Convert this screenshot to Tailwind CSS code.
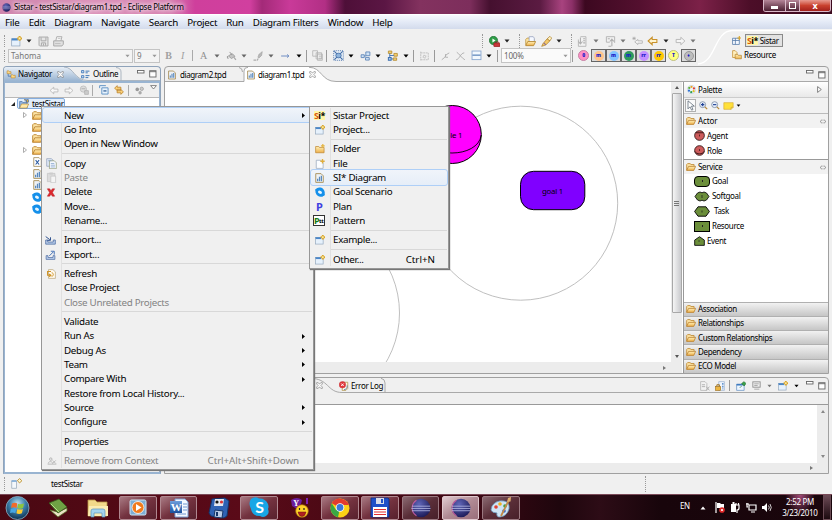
<!DOCTYPE html>
<html lang="en">
<head>
<meta charset="utf-8">
<title>Sistar - testSistar/diagram1.tpd - Eclipse Platform</title>
<script src="https://cdn.jsdelivr.net/npm/@tailwindcss/browser@4"></script>
</head>
<body class="w-[832px] h-[520px] overflow-hidden bg-[#f0f0f0] font-['Noto_Sans',sans-serif] text-[8px] leading-none tracking-[-0.340px] text-black">
<svg class="absolute h-0 w-0">
  <defs>
    <linearGradient id="gFold" x1="0" y1="0" x2="0" y2="1"><stop offset="0" stop-color="#fff0b8"/><stop offset="1" stop-color="#eeb04a"/></linearGradient>
    <linearGradient id="gBlue" x1="0" y1="0" x2="0" y2="1"><stop offset="0" stop-color="#6f9fdc"/><stop offset="1" stop-color="#1a4f9c"/></linearGradient>
    <radialGradient id="gEcl" cx=".4" cy=".3" r=".8"><stop offset="0" stop-color="#6066b8"/><stop offset="1" stop-color="#15134f"/></radialGradient>
    <radialGradient id="gOrb" cx=".5" cy=".3" r=".7"><stop offset="0" stop-color="#b9dcec"/><stop offset=".5" stop-color="#3b7ea8"/><stop offset="1" stop-color="#0d3150"/></radialGradient>
  </defs>
  <symbol id="caret" viewBox="0 0 6 4"><path d="M0.5 0.5h5L3 3.5z" fill="currentColor"/></symbol>
  <symbol id="new" viewBox="0 0 16 16"><rect x="1" y="4" width="12" height="10.5" fill="#e6f1fc" stroke="#8aa0b8"/><rect x="1" y="3.5" width="9" height="3" fill="#4a86c8"/><path d="M12.5 0v7M9 3.5h7" stroke="#d9a62c" stroke-width="3"/><path d="M12.500 2v3M11 3.500h3" stroke="#fff3b0" stroke-width="1.400"/></symbol>
  <symbol id="save" viewBox="0 0 16 16"><path d="M1.500 1.500h13v13h-12l-1-1z" fill="#e6e6e6" stroke="#a8a8a8" stroke-width="1.400"/><path d="M4.500 2v5h7V2M5 14v-4h6v4M8 11v3" fill="none" stroke="#a8a8a8" stroke-width="1.400"/></symbol>
  <symbol id="print" viewBox="0 0 16 16"><path d="M4 7l1.500-6H13l-1.500 6" fill="#f6f6f6" stroke="#a8a8a8" stroke-width="1.300"/><path d="M1 7h14v5l-2 2.500H1z" fill="#e0e0e0" stroke="#a8a8a8" stroke-width="1.400"/><path d="M3 11h8M7 3.500h4" stroke="#b0b0b0"/></symbol>
  <symbol id="run" viewBox="0 0 16 16"><circle cx="6.500" cy="6.500" r="6" fill="#2f9e48" stroke="#1d6e30"/><path d="M5 3.500v6l4.500-3z" fill="#fff"/><rect x="7" y="10" width="9" height="5.500" rx="1" fill="#c8373a" stroke="#8b2023"/><path d="M9.500 10V8.500h4V10" fill="none" stroke="#8b2023"/></symbol>
  <symbol id="open" viewBox="0 0 16 16"><path d="M1 13V5l2-2h4l1 1.500h5V8" fill="#fbe3a0" stroke="#b78a35"/><path d="M6 8V1h6l1.500 2v5" fill="#f5f8ff" stroke="#8a97b8"/><path d="M1 14l3-6h11.500l-3 6z" fill="url(#gFold)" stroke="#b78a35" stroke-width="1.300"/></symbol>
  <symbol id="wand" viewBox="0 0 16 16"><path d="M1 15l2-4 6-7 4 3-6 6z" fill="#f4c96a" stroke="#a77820"/><path d="M9 4l4-3.500 2.500 2.500L13 7z" fill="#fff4c8" stroke="#a77820"/><path d="M4 10l3 3" stroke="#8a6a9a" stroke-width="1.500"/></symbol>
  <symbol id="annd" viewBox="0 0 16 16"><path d="M5 1h8v14H2V5" fill="#f2f2f2" stroke="#b4b4b4" stroke-width="1.300"/><path d="M5 2v9M2 8l3 3.500L8 8M9 4h3M9 7h3M9 10h3" fill="none" stroke="#b0b0b0" stroke-width="1.600"/></symbol>
  <symbol id="annu" viewBox="0 0 16 16"><path d="M2 1h12v9M2 1v8h5" fill="#f2f2f2" stroke="#b4b4b4" stroke-width="1.400"/><path d="M10 15V5M7 8l3-3.500L13 8M4 4h3M5 15h4" fill="none" stroke="#b0b0b0" stroke-width="1.600"/></symbol>
  <symbol id="bstar" viewBox="0 0 16 16"><path d="M4 8.500L8.500 5v2H15v3.500H8.500v2z" fill="#f4f4f4" stroke="#b0b0b0" stroke-width="1.200"/><path d="M3 1v5M.5 3.500h5M1 2l4 3M5 2L1 5" stroke="#a8a8a8"/></symbol>
  <symbol id="back" viewBox="0 0 16 16"><path d="M1 8l6.500-6v3.500H15v5H7.500V14z" fill="#fff4cf" stroke="currentColor" stroke-width="1.700"/></symbol>
  <symbol id="fwd" viewBox="0 0 16 16"><path d="M15 8L8.500 2v3.500H1v5h7.500V14z" fill="#f6f6f6" stroke="#b4b4b4" stroke-width="1.400"/></symbol>
  <symbol id="gback" viewBox="0 0 16 16"><path d="M1 8l6.500-6v3.500H15v5H7.500V14z" fill="#f8f8f8" stroke="#b4b4b4" stroke-width="1.400"/></symbol>
  <symbol id="bucket" viewBox="0 0 16 16"><path d="M3 8l6-4 4.500 4.500L8 12z" fill="#c4c4c4" stroke="#989898" stroke-width="1.300"/><path d="M5 1.500l4 5M1.500 8v3.500h2" fill="none" stroke="#989898" stroke-width="1.500"/><path d="M12 10l3 4" stroke="#a8a8a8" stroke-width="2"/></symbol>
  <symbol id="pen" viewBox="0 0 16 16"><path d="M7 10l2-5 5-4-1 6-4 4z" fill="#b8b8b8" stroke="#a0a0a0"/><path d="M0 14.500h6l2-3" stroke="#aaa" stroke-width="1.800" fill="none" stroke-dasharray="4 1"/></symbol>
  <symbol id="arrow" viewBox="0 0 16 16"><path d="M1 8h12M10.500 5.500L13.500 8l-3 2.500" stroke="#6687c0" stroke-width="1.500" fill="none"/></symbol>
  <symbol id="copyg" viewBox="0 0 16 16"><path d="M1 1h7v8H1zM6 4h8v9H6zM8 6h7v9H8z" fill="#eee" stroke="#b4b4b4" stroke-width="1.200"/><path d="M10 9h4M10 12h4" stroke="#aaa"/></symbol>
  <symbol id="selall" viewBox="0 0 16 16"><rect x="1" y="1" width="14" height="14" fill="#e8f0f8" stroke="#4a72aa" stroke-width="1.300" stroke-dasharray="1.500 1.500"/><path d="M2 2l12 12M14 2L2 14" stroke="#3c68a4" stroke-width="1.500"/><ellipse cx="8" cy="8" rx="4" ry="3.500" fill="#8fb4dc" stroke="#345f9c"/></symbol>
  <symbol id="arrange" viewBox="0 0 16 16"><path d="M8.500 1.500h6.500v6H8.500zM1 6h5v4.500H1zM8 10.500h6v4H8zM6 8h3" fill="#cfe2f6" stroke="#5e86b8" stroke-width="1.400"/></symbol>
  <symbol id="align" viewBox="0 0 16 16"><path d="M2 1.500h5v3.500H2zM10 5h5v4h-5zM9 11.500h5v3.500H9z" fill="#f2cf72" stroke="#b58b2e" stroke-width="1.200"/><path d="M2 11h4v4H2z" fill="#a8c8ec" stroke="#3f72b0" stroke-width="1.500"/><path d="M4 5v6M4 8h6M6 13h3" stroke="#3f72b0" stroke-width="1.300"/></symbol>
  <symbol id="autosz" viewBox="0 0 16 16"><path d="M2 1v14M2 3h12v11H2M6 7h4v4H6z" fill="none" stroke="#b8b8b8" stroke-width="1.300" stroke-dasharray="3 1"/></symbol>
  <symbol id="routeA" viewBox="0 0 16 16"><path d="M2 14l5-4 2-4 5-3M8 5v5h4" fill="none" stroke="#b0b0b0" stroke-width="1.500"/></symbol>
  <symbol id="routeB" viewBox="0 0 16 16"><path d="M1 14c5 0 7-11 13-11M2 2c4 2 7 9 13 12" fill="none" stroke="#b0b0b0" stroke-width="1.500"/></symbol>
  <symbol id="table" viewBox="0 0 16 16"><rect x="1.500" y="1.500" width="13" height="12.500" fill="#f2f8fe" stroke="#8aa8d0" stroke-width="1.300"/><path d="M2 7.500h12" stroke="#6a90c0" stroke-width="2"/></symbol>
  <symbol id="persp" viewBox="0 0 16 16"><path d="M1 4h12v11H1zM1 8h12M6 4v11" fill="#f4f8ff" stroke="#567ba8" stroke-width="1.400"/><path d="M13 0v7M9.500 3.500h7" stroke="#d9a62c" stroke-width="2"/></symbol>
  <symbol id="resource" viewBox="0 0 16 16"><path d="M1 1h4l3 3v8H1z" fill="#fff0bf" stroke="#c58d2e" stroke-width="1.200"/><path d="M5 14V7h4l1 1.500h5V14z" fill="url(#gFold)" stroke="#b78a35" stroke-width="1.200"/></symbol>
  <symbol id="nav" viewBox="0 0 16 16"><path d="M1 3V1.500h3L5 3h3v3.500H1zM8 10V8.500h3l1 1h3.500V14H8z" fill="#fbd986" stroke="#b6812a"/><path d="M3 7v4h5" stroke="#3f6ea8" fill="none" stroke-width="1.300"/></symbol>
  <symbol id="outline" viewBox="0 0 16 16"><path d="M1 1h4v4H1zM1 10h4v4H1z" fill="#d0e3f8" stroke="#3973b5" stroke-width="1.500"/><path d="M8 2h7M8 5h4M8 10h7M8 13.500h5" stroke="#3973b5" stroke-width="1.700"/></symbol>
  <symbol id="x" viewBox="0 0 16 16"><path d="M1.500 1.500h3.500L8 5l3-3.500h3.500v3L11 8l3.500 3.500v3H11L8 11l-3 3.500H1.500v-3L5 8 1.500 4.500z" fill="#fff" stroke="#6e6e6e" stroke-width="1.300"/></symbol>
  <symbol id="home" viewBox="0 0 16 16"><circle cx="7" cy="6.500" r="5" fill="#ddd" stroke="#b0b0b0"/><path d="M9 9h6v6H9z" fill="#ccc" stroke="#a8a8a8"/><path d="M4 6h6" stroke="#999"/></symbol>
  <symbol id="collapse" viewBox="0 0 16 16"><path d="M1 5V1h10M4.500 4.500h10v10h-10z" fill="#e8f3fd" stroke="#5f92c4" stroke-width="1.500"/><path d="M7 9.500h5" stroke="#1d4f8c" stroke-width="1.800"/></symbol>
  <symbol id="link" viewBox="0 0 16 16"><path d="M1 5l4-4v2.500h6V7H5v2z" fill="#fbd27a" stroke="#b77a1b" stroke-width="1.200"/><path d="M15 11l-4 4v-2.500H5V9h6V7z" fill="#fbd27a" stroke="#b77a1b" stroke-width="1.200"/></symbol>
  <symbol id="dots" viewBox="0 0 16 16"><circle cx="4" cy="6" r="3.200" fill="#999"/><circle cx="12" cy="5" r="3" fill="#ccc" stroke="#888"/><circle cx="9" cy="12" r="3" fill="#aaa"/></symbol>
  <symbol id="proj" viewBox="0 0 16 16"><path d="M1 14V4h4l1 1.500h7V14z" fill="#8fb3e0" stroke="#3c66a0"/><path d="M1 14.500l3-6.500h11.500l-3 6.500z" fill="#ffe9a8" stroke="#b78a35"/><path d="M8 0h2v4M12 1h3v4h-3z" fill="#f0c040" stroke="#2a4a80"/></symbol>
  <symbol id="folder" viewBox="0 0 16 13"><path d="M1 12V2.500L2.500 1h4L8 2.500h5V5" fill="#fde4a5" stroke="#c08a35" stroke-width="1.400"/><path d="M1 12l3-6.500h11.500l-3 6.500z" fill="url(#gFold)" stroke="#b9802e" stroke-width="1.300"/></symbol>
  <symbol id="folderc" viewBox="0 0 16 16"><path d="M1 14V4h5l1 1.500h7.500V14z" fill="url(#gFold)" stroke="#c08a35" stroke-width="1.200"/><path d="M12.500 0v6M9.500 3h6" stroke="#e4b440" stroke-width="2"/></symbol>
  <symbol id="filen" viewBox="0 0 16 16"><path d="M2 2h7l4 4v9H2z" fill="#fbfdff" stroke="#98a8bb" stroke-width="1.200"/><path d="M12 0v7M8.500 3.500h7" stroke="#e0ad3a" stroke-width="2.200"/></symbol>
  <symbol id="xfile" viewBox="0 0 14 16"><path d="M1 1h8.500L13 4.500V15H1z" fill="#fff" stroke="#a08a58" stroke-width="1.300"/><path d="M4 5l5.500 7M9.500 5L4 12" stroke="#2c5ba0" stroke-width="1.700"/></symbol>
  <symbol id="dfile" viewBox="0 0 14 16"><path d="M1 1h8.500L13 4.500V15H1z" fill="#eef2f6" stroke="#a58a50" stroke-width="1.400"/><path d="M4 13V9M7 13V6M10 13V4.500" stroke="#5a8abf" stroke-width="2"/></symbol>
  <symbol id="swirl" viewBox="0 0 16 16"><path d="M3 2c3-2 8-1 10 1s3 5 2.500 8-3.500 4.500-6.500 4.500S2 13 1 9s0-5.500 2-7z" fill="#1590ea"/><ellipse cx="8" cy="8.300" rx="3.400" ry="2.400" transform="rotate(30 8 8.300)" fill="#e8f6ff"/><path d="M0 5l4-2M12 14.500l4-2.500" stroke="#1590ea" stroke-width="1.500"/></symbol>
  <symbol id="copy" viewBox="0 0 16 16"><path d="M1 1h7l2 2v9H1z" fill="#dfe9f6" stroke="#8b9bb8"/><path d="M5 4h7l3 3v8.500H5z" fill="#f3f7fd" stroke="#8b9670"/><path d="M7 8h5M7 10.500h6M7 13h6M3 4h5" stroke="#7c9cc8"/></symbol>
  <symbol id="paste" viewBox="0 0 16 16"><path d="M2 2h11v12H2z" fill="#dcdcdc" stroke="#c2c2c2"/><path d="M5 .8h5v3H5z" fill="#ccc"/><path d="M7 6h7v9.500H7z" fill="#f4f4f4" stroke="#c2c2c2"/></symbol>
  <symbol id="del" viewBox="0 0 16 16"><path d="M1.500 1.500h4L8 5l2.500-3.500h4L10.500 8l4 6.500h-4L8 11l-2.500 3.500h-4l4-6.500z" fill="#e0282e" stroke="#b01c22" stroke-width=".9"/></symbol>
  <symbol id="imp" viewBox="0 0 16 14"><path d="M1 7h3v3h8V7h3v6H1z" fill="#b9cdea" stroke="#5472a5" stroke-width="1.200"/><path d="M1 2l6 4.500M8 3v4.500H3.500" stroke="#2c4f8c" fill="none" stroke-width="1.400"/></symbol>
  <symbol id="exp" viewBox="0 0 16 16"><path d="M1 9h3v3h8V9h3v6H1z" fill="#b9cdea" stroke="#5472a5" stroke-width="1.200"/><path d="M6 9.500l7-7M8.500 2H14v5.500" stroke="#4c77b8" fill="none" stroke-width="1.600"/></symbol>
  <symbol id="refresh" viewBox="0 0 16 16"><path d="M4 1h7l4 3.500V15H4z" fill="#fffaf0" stroke="#b09a68"/><path d="M8 4H2.500v6H7M5 8l3 2-3 2.500" fill="none" stroke="#cf9326" stroke-width="1.700"/><path d="M9 6c4 0 3 6 0 6" stroke="#cf9326" fill="none" stroke-width="1.500"/></symbol>
  <symbol id="rmctx" viewBox="0 0 16 12"><circle cx="6" cy="3" r="2" fill="none" stroke="#aaa" stroke-width="1.300"/><path d="M2 10c0-4 7-4 7 0M9 5l5 5M14 5L9 10M1 11h14" fill="none" stroke="#b0b0b0" stroke-width="1.300"/></symbol>
  <symbol id="palette" viewBox="0 0 16 16"><circle cx="8" cy="8" r="7.500" fill="#eef4fb" stroke="#b8c8dc"/><circle cx="8" cy="3.300" r="2" fill="#f0a020"/><circle cx="12.300" cy="6" r="2" fill="#e04030"/><circle cx="11.800" cy="11" r="2" fill="#e0c020"/><circle cx="7.500" cy="12.700" r="2" fill="#30a050"/><circle cx="3.500" cy="10" r="2" fill="#3070d0"/><circle cx="4" cy="5.300" r="2" fill="#60b030"/></symbol>
  <symbol id="cursor" viewBox="0 0 12 16"><path d="M1.500 1v12l3-3 2.500 5 2-1-2.300-5H11z" fill="#fff" stroke="#54606e" stroke-width="1.100"/></symbol>
  <symbol id="zin" viewBox="0 0 16 16"><circle cx="6.500" cy="6.500" r="5.300" fill="#eaf1fb" stroke="#7f8ea6" stroke-width="1.500"/><path d="M3.500 6.500h6M6.500 3.500v6" stroke="#1e3f94" stroke-width="2"/><path d="M10.500 10.500l4 4" stroke="#b98a3a" stroke-width="2.300"/></symbol>
  <symbol id="zout" viewBox="0 0 16 16"><circle cx="6.500" cy="6.500" r="5.300" fill="#eaf1fb" stroke="#7f8ea6" stroke-width="1.500"/><path d="M3.500 6.500h6" stroke="#1e3f94" stroke-width="2"/><path d="M10.500 10.500l4 4" stroke="#b98a3a" stroke-width="2.300"/></symbol>
  <symbol id="note" viewBox="0 0 16 12"><path d="M1 1h14v7l-3 3H1z" fill="#ffe03a" stroke="#d8ac30" stroke-width="1"/><path d="M12 11V8h3" fill="#fff4a0" stroke="#c79a1c"/></symbol>
  <symbol id="pin" viewBox="0 0 9 6"><path d="M3.500.7L1 3l2.500 2.300M5.500.7L8 3 5.500 5.300M4.500 1v1M4.500 4v1" fill="none" stroke="#777" stroke-width=".9"/></symbol>
  <symbol id="agent" viewBox="0 0 12 12"><circle cx="6" cy="6" r="5.300" fill="#cd5c5c" stroke="#2b1010" stroke-width=".9"/><path d="M1.800 3h8.400" stroke="#2b1010" stroke-width=".9"/><path d="M6 5v2" stroke="#401818" stroke-width=".9"/></symbol>
  <symbol id="role" viewBox="0 0 12 12"><circle cx="6" cy="6" r="5.300" fill="#cd5c5c" stroke="#2b1010" stroke-width=".9"/><path d="M.8 7c2 3.500 8.400 3.500 10.400 0" fill="none" stroke="#2b1010" stroke-width=".9"/><path d="M6 4.500v2" stroke="#401818" stroke-width=".9"/></symbol>
  <symbol id="min" viewBox="0 0 8 4"><rect x=".5" y=".5" width="6.500" height="2.500" fill="#fff" stroke="#666" stroke-width=".9"/></symbol>
  <symbol id="max" viewBox="0 0 8 8"><rect x=".7" y=".7" width="6.300" height="6.300" fill="#fff" stroke="#666" stroke-width=".9"/><path d="M.7 1.700H7" stroke="#666" stroke-width=".9"/></symbol>
  <symbol id="err" viewBox="0 0 16 16"><path d="M6 2h8v10l-3 3H5z" fill="#fffbe8" stroke="#ad9247" stroke-width="1.200"/><circle cx="5.500" cy="6" r="5.200" fill="#e0353a" stroke="#c83a3e" stroke-width=".8"/><path d="M3.500 4l4 4M7.500 4l-4 4" stroke="#fff" stroke-width="1.600"/><path d="M8 14c5-1 5-4 5-7" stroke="#4468a8" fill="none" stroke-width="1.300"/></symbol>
  <symbol id="doclock" viewBox="0 0 16 16"><path d="M1 1h7l3 3v11H1z" fill="#f2f2f2" stroke="#b0b0b0" stroke-width="1.200"/><path d="M3 6h5M3 9h5M10 9l5 6M15 9l-5 6" stroke="#aaa" stroke-width="1.400"/></symbol>
  <symbol id="lock" viewBox="0 0 16 16"><path d="M6 1h9v14H6z" fill="#eef5fd" stroke="#8fa9cb"/><path d="M12.500 3v10" stroke="#4d82c2" stroke-width="2" stroke-dasharray="3 1.500"/><rect x="1" y="9" width="8" height="6" fill="#edb642" stroke="#9c6d18"/><path d="M3 9V6h4v3" fill="none" stroke="#9c6d18" stroke-width="1.500"/></symbol>
  <symbol id="pincon" viewBox="0 0 16 16"><path d="M1 5h12v10H1z" fill="#eef6ff" stroke="#6a94c4" stroke-width="1.200"/><path d="M1 6h10" stroke="#3f7cc0" stroke-width="2.500"/><path d="M6 11l3-3M9 4l4 4 3-4-3-3z" fill="#3ba04a" stroke="#207030"/></symbol>
  <symbol id="monitor" viewBox="0 0 16 16"><rect x="1.500" y="1.500" width="13" height="9.500" fill="#f0f0f0" stroke="#8e8e8e" stroke-width="1.600"/><path d="M4 5h8M4 8h6M4 14.500h9" stroke="#999" stroke-width="1.400"/></symbol>
  <symbol id="sbicon" viewBox="0 0 16 16"><path d="M1 4h7v11H1z" fill="#f4f8fc" stroke="#a0b0c0" stroke-width="1.200"/><path d="M1 4.500h7" stroke="#77a8d8" stroke-width="2"/><path d="M12.500 .8L15.700 4l-3.200 3.200L9.300 4z" fill="#fff6d0" stroke="#b98c2c" stroke-width="1.400"/></symbol>
  <symbol id="eclipse" viewBox="0 0 22 22"><circle cx="11" cy="11" r="10.300" fill="url(#gEcl)"/><path d="M6 2.500a10 10 0 0 0 0 17" fill="none" stroke="#c05a9a" stroke-width="1.200"/><path d="M1 9h20M.5 11.500h21M1 14h20" stroke="#b4b8e4" stroke-width=".9"/></symbol>
  <symbol id="ghex" viewBox="0 0 16 11"><path d="M.6 5.500L4 .8h8l3.400 4.700L12 10.200H4z" fill="#6b8e3a" stroke="#111" stroke-width="1"/><path d="M8 4.500v2" stroke="#222" stroke-width=".8"/></symbol>
  <symbol id="gcloud" viewBox="0 0 16 11"><path d="M1 5.500L3.500 2 6 1l2 .8L10 1l2.500 1L15 5.500 12.500 9 10 10l-2-.8L6 10 3.500 9z" fill="#6b8e3a" stroke="#111" stroke-width=".9"/><path d="M8 4v3" stroke="#222" stroke-width=".8"/></symbol>
  <symbol id="gevent" viewBox="0 0 12 11"><path d="M.7 10.300V4.500L6 .8l5.300 3.700v5.800z" fill="#6b8e3a" stroke="#111" stroke-width="1"/><path d="M5.500 4.500v2" stroke="#222" stroke-width=".8"/></symbol>
</svg>

<main class="relative flex h-[520px] w-[832px] flex-col">
  <!-- Title bar -->
  <header class="flex h-[14px] shrink-0 items-center bg-[linear-gradient(90deg,#cf86ae_0,#dc93ba_90px,#d884b3_170px,#cf3f9c_195px,#d13f9f_250px,#a32a78_262px,#c93a99_290px,#b22f85_325px,#4e0f38_345px,#5b1644_385px,#83325f_420px,#7d2e5c_470px,#45102f_490px,#5b1b42_540px,#a8437f_562px,#8c3068_572px,#3c0820_585px,#54102f_640px,#7c2148_700px,#4c0e28_750px,#3b0a1e_832px)] pl-[2px]">
    <svg class="h-[9px] w-[9px]"><use href="#eclipse"/></svg>
    <span class="ml-[3px] w-[175px] whitespace-nowrap tracking-[-0.280px] [text-shadow:0_0_4px_#fff,0_0_5px_#fff]">Sistar - testSistar/diagram1.tpd - Eclipse Platform</span>
    <div class="-mt-[2px] ml-[574px] flex h-[12px] overflow-hidden rounded-b-[3px] border border-t-0 border-[#d9b8c8]">
      <div class="flex w-[22px] items-center justify-center border-r border-[#d9b8c8] bg-linear-to-b from-[#b58699] to-[#4c2033]"><i class="mt-[3px] block h-[3px] w-[7px] bg-white"></i></div>
      <div class="flex w-[14px] items-center justify-center border-r border-[#d9b8c8] bg-linear-to-b from-[#b58699] to-[#4c2033]"><i class="block h-[7px] w-[7px] border-[1.500px] border-white"></i></div>
      <div class="flex w-[30px] items-center justify-center bg-linear-to-b from-[#e79a90] via-[#c9412f] to-[#a3201b] text-[9px] font-bold text-white">x</div>
    </div>
  </header>

  <!-- Menu bar -->
  <nav class="flex h-[15px] shrink-0 items-center gap-[9.200px] border-t border-white bg-linear-to-b from-[#f7f9fd] via-[#e4eaf6] to-[#d3dbec] pl-[5px] pt-px text-[9.800px] tracking-[-0.300px]">
    <span>File</span><span>Edit</span><span>Diagram</span><span>Navigate</span><span>Search</span><span>Project</span><span>Run</span><span>Diagram Filters</span><span>Window</span><span>Help</span>
  </nav>

  <!-- Toolbars -->
  <section class="relative flex h-[37px] shrink-0">
    <div class="flex w-[700px] flex-col pt-[5px] text-[#222]">
      <div class="flex h-[14px] items-center pl-[4px] [&>svg]:shrink-0">
        <i class="h-[12px] border-l border-dotted border-[#999]"></i>
        <svg class="ml-[6px] h-[11px] w-[11px]"><use href="#new"/></svg>
        <svg class="ml-[4px] h-[4px] w-[6px]"><use href="#caret"/></svg>
        <svg class="ml-[6px] h-[11px] w-[11px]"><use href="#save"/></svg>
        <svg class="ml-[4px] h-[11px] w-[11px]"><use href="#print"/></svg>
        <i class="ml-[418px] h-[14px] border-l border-dotted border-[#999]"></i>
        <svg class="ml-[6px] h-[11px] w-[11px]"><use href="#run"/></svg>
        <svg class="ml-[4px] h-[4px] w-[6px]"><use href="#caret"/></svg>
        <i class="ml-[9px] h-[14px] border-l border-dotted border-[#999]"></i>
        <svg class="ml-[5px] h-[11px] w-[11px]"><use href="#open"/></svg>
        <svg class="ml-[5px] h-[11px] w-[11px]"><use href="#wand"/></svg>
        <svg class="ml-[4px] h-[4px] w-[6px]"><use href="#caret"/></svg>
        <i class="ml-[9px] h-[14px] border-l border-dotted border-[#999]"></i>
        <svg class="ml-[5px] h-[11px] w-[11px]"><use href="#annd"/></svg>
        <svg class="ml-[5px] h-[4px] w-[6px] text-[#777]"><use href="#caret"/></svg>
        <svg class="ml-[6px] h-[11px] w-[11px]"><use href="#annu"/></svg>
        <svg class="ml-[4px] h-[4px] w-[6px] text-[#777]"><use href="#caret"/></svg>
        <svg class="ml-[6px] h-[11px] w-[11px]"><use href="#bstar"/></svg>
        <svg class="ml-[4px] h-[10px] w-[11px] text-[#c8922c]"><use href="#back"/></svg>
        <svg class="ml-[5px] h-[4px] w-[6px]"><use href="#caret"/></svg>
        <svg class="ml-[6px] h-[10px] w-[11px]"><use href="#fwd"/></svg>
        <svg class="ml-[4px] h-[4px] w-[6px] text-[#777]"><use href="#caret"/></svg>
      </div>
      <div class="flex h-[15px] items-center pl-[4px] text-[#444] [&>*]:shrink-0">
        <i class="h-[12px] border-l border-dotted border-[#999]"></i>
        <div class="ml-[3px] flex h-[14px] w-[125px] items-center justify-between border border-[#c4c4c4] bg-[#f4f4f4] px-[2px] tracking-[0px] text-[#777]">Tahoma<svg class="h-[4px] w-[5px] text-[#999]"><use href="#caret"/></svg></div>
        <div class="ml-[1px] flex h-[14px] w-[26px] items-center justify-between border border-[#c4c4c4] bg-[#f4f4f4] px-[2px] text-[#777]">9<svg class="h-[4px] w-[5px] text-[#999]"><use href="#caret"/></svg></div>
        <b class="ml-[3px] w-[11px] text-center font-['Liberation_Serif',serif] text-[10px] text-[#a0a0a0]">B</b>
        <em class="ml-[3px] w-[11px] text-center font-['Liberation_Serif',serif] text-[10px] text-[#a0a0a0]">I</em>
        <i class="ml-[4px] h-[11px] border-l border-[#aaa]"></i>
        <span class="ml-[5px] w-[11px] text-center font-['Liberation_Serif',serif] text-[10px] text-[#909090]">A</span>
        <svg class="ml-[5px] h-[4px] w-[6px] text-[#666]"><use href="#caret"/></svg>
        <svg class="ml-[6px] h-[10px] w-[11px]"><use href="#bucket"/></svg>
        <svg class="ml-[4px] h-[4px] w-[6px] text-[#666]"><use href="#caret"/></svg>
        <svg class="ml-[6px] h-[10px] w-[11px]"><use href="#pen"/></svg>
        <svg class="ml-[4px] h-[4px] w-[6px] text-[#666]"><use href="#caret"/></svg>
        <svg class="ml-[6px] h-[10px] w-[11px]"><use href="#arrow"/></svg>
        <svg class="ml-[5px] h-[4px] w-[6px] text-black"><use href="#caret"/></svg>
        <i class="ml-[4px] h-[12px] border-l border-[#999]"></i>
        <svg class="ml-[5px] h-[11px] w-[11px]"><use href="#copyg"/></svg>
        <i class="ml-[3px] h-[12px] border-l border-[#999]"></i>
        <svg class="ml-[6px] h-[11px] w-[11px]"><use href="#selall"/></svg>
        <svg class="ml-[4px] h-[4px] w-[6px] text-black"><use href="#caret"/></svg>
        <svg class="ml-[6px] h-[10px] w-[11px]"><use href="#arrange"/></svg>
        <svg class="ml-[4px] h-[4px] w-[6px] text-black"><use href="#caret"/></svg>
        <svg class="ml-[6px] h-[11px] w-[11px]"><use href="#align"/></svg>
        <svg class="ml-[5px] h-[4px] w-[6px] text-black"><use href="#caret"/></svg>
        <i class="ml-[4px] h-[12px] border-l border-[#999]"></i>
        <svg class="ml-[5px] h-[10px] w-[11px]"><use href="#autosz"/></svg>
        <i class="ml-[4px] h-[12px] border-l border-[#999]"></i>
        <svg class="ml-[5px] h-[10px] w-[11px]"><use href="#routeA"/></svg>
        <svg class="ml-[4px] h-[10px] w-[11px]"><use href="#routeB"/></svg>
        <svg class="ml-[5px] h-[11px] w-[11px]"><use href="#table"/></svg>
        <svg class="ml-[4px] h-[4px] w-[6px] text-black"><use href="#caret"/></svg>
        <i class="ml-[5px] h-[12px] border-l border-[#999]"></i>
        <div class="ml-[3px] flex h-[15px] w-[70px] items-center justify-between border border-[#c4c4c4] bg-[#fafafa] px-[2px] tracking-[-0.200px] text-[#666]">100%<svg class="h-[4px] w-[5px] text-[#999]"><use href="#caret"/></svg></div>
        <i class="ml-[1px] h-[12px] border-l border-[#999]"></i>
        <div class="ml-[3px] flex text-[5px] font-bold tracking-[-0.200px] text-[#1c1cc8] *:flex *:h-[13px] *:w-[15px] *:items-center *:justify-center">
          <span><b class="flex h-[11px] w-[11px] items-center justify-center rounded-full border border-[#c880a4] bg-[#ff8fc4]">0</b></span>
          <span class="border border-[#666] bg-[#dcdcdc]"><b class="flex h-[10px] w-[10px] items-center justify-center rounded-full bg-[#ffc48c]">m</b></span>
          <span class="border border-[#666] bg-[#dcdcdc]"><b class="flex h-[10px] w-[10px] items-center justify-center rounded-full bg-[#84c4ff]">m</b></span>
          <span class="border border-[#666] bg-[#dcdcdc]"><b class="flex h-[10px] w-[10px] items-center justify-center rounded-full bg-[#2e9a5c]">m</b></span>
          <span class="border border-[#666] bg-[#dcdcdc]"><b class="flex h-[10px] w-[10px] items-center justify-center rounded-full bg-[#c490ff]">rr</b></span>
          <span class="border border-[#666] bg-[#dcdcdc]"><b class="flex h-[10px] w-[10px] items-center justify-center rounded-full bg-[#ffc800]">rr</b></span>
          <span><b class="flex h-[11px] w-[11px] items-center justify-center rounded-full border border-[#c0c080] bg-[#ffff80]">T</b></span>
          <span class="border border-[#666] bg-[#dcdcdc]"><b class="flex h-[10px] w-[10px] items-center justify-center rounded-full border border-[#999] bg-[#bdbdbd]">&#9830;</b></span>
        </div>
      </div>
    </div>
    <svg class="absolute left-[698px] top-0 h-[37px] w-[134px]" viewBox="0 0 134 37"><path d="M0 35C18 34 16 2 34 1.500H134" fill="none" stroke="#fff" stroke-width="1.300"/></svg>
    <div class="flex flex-col pl-[32px] pt-[5px]">
      <div class="flex h-[13px] items-center">
        <svg class="h-[9px] w-[9px]"><use href="#persp"/></svg>
        <div class="ml-[4px] flex h-[13px] w-[38px] items-center border border-[#8a8a8a] bg-[#e2e2e2] pl-[1px]"><b class="bg-[#fff7a8] text-[9px] leading-[9px] tracking-[-0.600px]"><span class="text-[#d85a10]">S</span>i*</b><span class="ml-[2px]">Sistar</span></div>
      </div>
      <div class="flex h-[15px] items-center"><svg class="h-[10px] w-[10px]"><use href="#resource"/></svg><span class="ml-[2px]">Resource</span></div>
    </div>
  </section>

  <!-- Workbench -->
  <section class="flex h-[408px] shrink-0 gap-[3px] pl-[3px]">
    <!-- Navigator view -->
    <div class="relative flex w-[158px] flex-col rounded-t-[4px] border border-[#8fa3ba] border-b-[#99b4d1] bg-[#f0f0f0]">
      <svg class="absolute left-0 top-0 h-[14px] w-[156px]" viewBox="0 0 156 14"><defs><linearGradient id="gTab" x1="0" y1="0" x2="0" y2="1"><stop offset="0" stop-color="#e8eff7"/><stop offset="1" stop-color="#99b4d1"/></linearGradient></defs><path d="M0 14V3Q0 0 3 0H60C70 0 70 14 84 14z" fill="url(#gTab)"/><path d="M60 0C70 0 70 13.500 84 13.500H156M112 .5Q117 1 117 5V13.500" fill="none" stroke="#9aa7b5" stroke-width=".8"/></svg>
      <div class="relative flex h-[14px] shrink-0 items-center pl-[2px]">
        <svg class="h-[9px] w-[10px]"><use href="#nav"/></svg><span class="ml-[2px] w-[35px]">Navigator</span>
        <svg class="ml-[4px] h-[7px] w-[7px]"><use href="#x"/></svg>
        <svg class="ml-[17px] h-[9px] w-[9px]"><use href="#outline"/></svg><span class="ml-[3px] w-[26px]">Outline</span>
        <svg class="mb-[5px] ml-[18px] h-[4px] w-[8px]"><use href="#min"/></svg>
        <svg class="ml-[4px] h-[8px] w-[8px]"><use href="#max"/></svg>
      </div>
      <div class="flex flex-1 flex-col border-x-[1.500px] border-b-[1.500px] border-t-2 border-[#99b4d1] bg-white">
        <div class="flex h-[15px] shrink-0 items-center border-b border-[#b8b8b8] bg-[#f0f0f0] pl-[44px]">
          <svg class="h-[9px] w-[10px]"><use href="#gback"/></svg>
          <svg class="ml-[5px] h-[9px] w-[10px]"><use href="#fwd"/></svg>
          <svg class="ml-[5px] h-[10px] w-[10px]"><use href="#home"/></svg>
          <i class="ml-[3px] h-[11px] border-l border-[#aaa]"></i>
          <svg class="ml-[6px] h-[10px] w-[10px]"><use href="#collapse"/></svg>
          <svg class="ml-[5px] h-[10px] w-[10px]"><use href="#link"/></svg>
          <i class="ml-[4px] h-[11px] border-l border-[#aaa]"></i>
          <svg class="ml-[6px] h-[9px] w-[9px]"><use href="#dots"/></svg>
          <svg class="mb-[5px] ml-[6px] h-[5px] w-[7px]" viewBox="0 0 7 5"><path d="M.6.6h5.800L3.500 4z" fill="#fff" stroke="#666" stroke-width=".8"/></svg>
        </div>
        <ul class="flex flex-col *:flex *:h-[11.670px] *:items-center">
          <li class="pl-[5px]"><svg class="h-[6px] w-[6px]" viewBox="0 0 6 6"><path d="M5 1v4H1z" fill="#222"/></svg>
            <div class="ml-[1px] flex h-[11px] w-[48px] items-center rounded-[2px] border border-[#84acdd] bg-[#e0edfb] pl-[1px]"><svg class="h-[10px] w-[10px]"><use href="#proj"/></svg><span class="ml-[3px] whitespace-nowrap">testSistar</span></div></li>
          <li class="pl-[18px]"><svg class="h-[6px] w-[4px]" viewBox="0 0 4 6"><path d="M.5.5v5L3.500 3z" fill="#fff" stroke="#999" stroke-width=".8"/></svg><svg class="ml-[5px] h-[9px] w-[11px]"><use href="#folder"/></svg></li>
          <li class="pl-[27px]"><svg class="h-[9px] w-[11px]"><use href="#folder"/></svg></li>
          <li class="pl-[27px]"><svg class="h-[9px] w-[11px]"><use href="#folder"/></svg></li>
          <li class="pl-[18px]"><svg class="h-[6px] w-[4px]" viewBox="0 0 4 6"><path d="M.5.5v5L3.500 3z" fill="#fff" stroke="#999" stroke-width=".8"/></svg><svg class="ml-[5px] h-[9px] w-[11px]"><use href="#folder"/></svg></li>
          <li class="pl-[28px]"><svg class="h-[10px] w-[9px]"><use href="#xfile"/></svg></li>
          <li class="pl-[28px]"><svg class="h-[10px] w-[9px]"><use href="#dfile"/></svg></li>
          <li class="pl-[28px]"><svg class="h-[10px] w-[9px]"><use href="#dfile"/></svg></li>
          <li class="pl-[27px]"><svg class="h-[10px] w-[10px]"><use href="#swirl"/></svg></li>
          <li class="pl-[27px]"><svg class="h-[10px] w-[10px]"><use href="#swirl"/></svg></li>
        </ul>
      </div>
    </div>

    <div class="flex w-[665px] flex-col gap-[3px]">
      <!-- Editor -->
      <div class="relative flex h-[308px] flex-col rounded-t-[4px] border border-[#a0a0a0] bg-[#f0f0f0]">
        <svg class="absolute left-0 top-0 h-[15px] w-[663px]" viewBox="0 0 663 15"><path d="M79 15V4Q79 0 83 0H144C157 0 156 14.500 171 14.500V15z" fill="#fff"/><path d="M0 14.500H79V4Q79 .3 83 .3M144 .3C157 .3 156 14.500 171 14.500H663M74 .5Q77.500 1 77.500 5" fill="none" stroke="#a0a0a0" stroke-width=".9"/></svg>
        <div class="relative flex h-[15px] shrink-0 items-center pl-[3px]">
          <svg class="h-[10px] w-[8px]"><use href="#dfile"/></svg><span class="ml-[4px] w-[46px] tracking-[-0.400px]">diagram2.tpd</span>
          <svg class="ml-[21px] h-[10px] w-[8px]"><use href="#dfile"/></svg><span class="ml-[3px] w-[46px] tracking-[-0.400px]">diagram1.tpd</span>
          <svg class="ml-[5px] h-[7px] w-[7px]"><use href="#x"/></svg>
          <svg class="mb-[5px] ml-[490px] h-[4px] w-[8px]"><use href="#min"/></svg>
          <svg class="ml-[4px] h-[8px] w-[8px]"><use href="#max"/></svg>
        </div>
        <div class="flex h-[291px] bg-white">
          <div class="flex w-[506px] flex-col">
            <!-- Diagram canvas: x origin 165, y origin 82 -->
            <svg class="h-[280px] w-[506px]" viewBox="165 82 506 280">
              <g fill="none" stroke="#b8b8b8" stroke-width=".9"><circle cx="520.700" cy="203.200" r="97"/><circle cx="302.500" cy="313" r="97"/></g>
              <circle cx="452.300" cy="134.500" r="29" fill="#f0f" stroke="#000" stroke-width="1"/>
              <path d="M423.300 135C426 159 478 159 481.300 135" fill="none" stroke="#000" stroke-width=".9"/>
              <rect x="520.500" y="171.300" width="64.300" height="38.400" rx="13" fill="#8000ff" stroke="#000" stroke-width="1"/>
              <g font-family="Noto Sans" font-size="7.800" letter-spacing="-.2" text-anchor="middle"><text x="452.500" y="137.500">role 1</text><text x="552.500" y="194">goal 1</text></g>
            </svg>
            <div class="flex h-[11px] items-center justify-end bg-[#ececec] pr-[5px]"><i class="border-y-[2px] border-l-[3px] border-y-transparent border-l-[#777]"></i></div>
          </div>
          <div class="flex w-[11px] flex-col items-center bg-[#ececec]">
            <i class="mb-[4px] mt-[4px] border-x-[2.500px] border-b-[3px] border-x-transparent border-b-[#555]"></i>
            <div class="flex h-[220px] w-[10px] flex-col items-center justify-center gap-[1px] rounded-[1px] border border-[#a8a8a8] bg-linear-to-r from-[#f5f5f5] to-[#c9cacd] *:h-px *:w-[5px] *:bg-[#777]"><i></i><i></i><i></i></div>
            <i class="mt-[42px] border-x-[2.500px] border-t-[3px] border-x-transparent border-t-[#555]"></i>
          </div>
          <!-- Palette -->
          <div class="ml-[1px] flex w-[145px] flex-col border-l border-[#999]">
            <div class="flex h-[16px] shrink-0 items-center border-b border-[#ccc] bg-linear-to-b from-white to-[#e9e9e9] pl-[3px]"><svg class="h-[9px] w-[9px]"><use href="#palette"/></svg><span class="ml-[2px]">Palette</span><svg class="ml-auto mr-[6px] h-[7px] w-[5px]" viewBox="0 0 5 7"><path d="M.6.6v5.800L4.300 3.500z" fill="#fff" stroke="#666" stroke-width=".8"/></svg></div>
            <div class="flex h-[15px] shrink-0 items-center bg-[#f2f2f2] pl-[1px]">
              <div class="flex h-[13px] w-[11px] items-center justify-center border border-[#b0b0b0] bg-[#fafafa]"><svg class="h-[11px] w-[8px]"><use href="#cursor"/></svg></div>
              <svg class="ml-[3px] h-[9px] w-[9px]"><use href="#zin"/></svg><svg class="ml-[3px] h-[9px] w-[9px]"><use href="#zout"/></svg><svg class="ml-[3px] h-[8px] w-[11px]"><use href="#note"/></svg><svg class="ml-[2px] h-[3px] w-[5px]"><use href="#caret"/></svg>
            </div>
            <div class="flex h-[15px] shrink-0 items-center border-t border-[#bbb] bg-[#f2f2f2] pl-[2px]"><svg class="h-[8px] w-[10px]"><use href="#folder"/></svg><span class="ml-[2px] tracking-[-0.100px]">Actor</span><svg class="ml-auto mr-[1px] h-[5px] w-[8px]"><use href="#pin"/></svg></div>
            <div class="flex h-[31px] shrink-0 flex-col pl-[10px] *:flex *:h-[15px] *:items-center *:gap-[2px]">
              <div><svg class="h-[11px] w-[11px]"><use href="#agent"/></svg>Agent</div>
              <div><svg class="h-[11px] w-[11px]"><use href="#role"/></svg>Role</div>
            </div>
            <div class="flex h-[15px] shrink-0 items-center border-t border-[#999] bg-[#f2f2f2] pl-[2px]"><svg class="h-[8px] w-[10px]"><use href="#folder"/></svg><span class="ml-[2px]">Service</span><svg class="ml-auto mr-[1px] h-[5px] w-[8px]"><use href="#pin"/></svg></div>
            <div class="flex flex-1 flex-col pl-[10px] *:flex *:h-[14.900px] *:items-center *:gap-[2px]">
              <div><i class="flex h-[11px] w-[16px] items-center justify-center rounded-[4px] border border-black bg-[#6b8e3a] after:h-[2px] after:w-px after:bg-[#222]"></i>Goal</div>
              <div><svg class="h-[11px] w-[16px]"><use href="#gcloud"/></svg>Softgoal</div>
              <div class="*:mr-[2px]"><svg class="h-[11px] w-[16px]"><use href="#ghex"/></svg>Task</div>
              <div><i class="flex h-[11px] w-[16px] items-center justify-center border border-black bg-[#6b8e3a] after:h-[2px] after:w-px after:bg-[#222]"></i>Resource</div>
              <div><svg class="h-[10px] w-[11px]"><use href="#gevent"/></svg>Event</div>
            </div>
            <div class="flex flex-col tracking-[-0.360px] *:flex *:h-[14.300px] *:items-center *:gap-[2px] *:border-t *:border-[#b0b0b0] *:bg-linear-to-b *:from-[#f2f2f2] *:to-[#c6c6c6] *:pl-[2px]">
              <div><svg class="h-[8px] w-[10px]"><use href="#folder"/></svg>Association</div>
              <div><svg class="h-[8px] w-[10px]"><use href="#folder"/></svg>Relationships</div>
              <div><svg class="h-[8px] w-[10px]"><use href="#folder"/></svg>Custom Relationships</div>
              <div><svg class="h-[8px] w-[10px]"><use href="#folder"/></svg>Dependency</div>
              <div><svg class="h-[8px] w-[10px]"><use href="#folder"/></svg>ECO Model</div>
            </div>
          </div>
        </div>
      </div>

      <!-- Bottom views -->
      <div class="relative flex h-[97px] flex-col rounded-t-[4px] border border-[#a0a0a0] bg-[#f0f0f0]">
        <svg class="absolute left-0 top-0 h-[15px] w-[663px]" viewBox="0 0 663 15"><path d="M145 .3C164 .3 162 14.500 177 14.500H663M216 .3Q220 1 220 5V14.500" fill="none" stroke="#a0a0a0" stroke-width=".9"/></svg>
        <div class="relative flex h-[15px] shrink-0 items-center pl-[151px]">
          <svg class="h-[7px] w-[7px]"><use href="#x"/></svg>
          <svg class="ml-[16px] h-[10px] w-[10px]"><use href="#err"/></svg><span class="ml-[2px] w-[33px] whitespace-nowrap">Error Log</span>
          <svg class="ml-[316px] h-[10px] w-[10px]"><use href="#doclock"/></svg>
          <svg class="ml-[5px] h-[10px] w-[10px]"><use href="#lock"/></svg>
          <i class="ml-[4px] h-[11px] border-l border-[#999]"></i>
          <svg class="ml-[6px] h-[10px] w-[10px]"><use href="#pincon"/></svg>
          <svg class="ml-[6px] h-[9px] w-[9px]"><use href="#monitor"/></svg>
          <svg class="ml-[6px] h-[4px] w-[5px] text-[#777]"><use href="#caret"/></svg>
          <svg class="ml-[6px] h-[10px] w-[10px]"><use href="#new"/></svg>
          <svg class="ml-[6px] h-[4px] w-[5px]"><use href="#caret"/></svg>
          <svg class="mb-[5px] ml-[7px] h-[4px] w-[8px]"><use href="#min"/></svg>
          <svg class="ml-[4px] h-[8px] w-[8px]"><use href="#max"/></svg>
        </div>
        <div class="h-[12px] border-b border-[#999]"></div>
        <div class="flex h-[58px]">
          <div class="w-[652px] bg-white"></div>
          <div class="flex flex-1 flex-col items-center justify-between bg-[#ececec] py-[5px]"><i class="border-x-[2.500px] border-b-[3px] border-x-transparent border-b-[#888]"></i><i class="border-x-[2.500px] border-t-[3px] border-x-transparent border-t-[#888]"></i></div>
        </div>
        <div class="flex flex-1 items-center justify-end bg-[#ececec] pr-[15px]"><i class="border-y-[2px] border-l-[3px] border-y-transparent border-l-[#777]"></i></div>
      </div>
    </div>
  </section>

  <!-- Status bar -->
  <section class="flex h-[20px] shrink-0 items-center pl-[4px]">
    <i class="h-[14px] border-l border-dotted border-[#999]"></i>
    <svg class="mb-[2px] ml-[6px] h-[11px] w-[11px]"><use href="#sbicon"/></svg>
    <span class="ml-[29px] w-[40px]">testSistar</span>
    <i class="ml-[554px] h-[16px] border-l border-dotted border-[#999]"></i>
  </section>

  <!-- Taskbar -->
  <footer class="flex h-[26px] shrink-0 items-center border-t border-[#7a4a58] bg-[linear-gradient(90deg,#4a0812_0,#5a0a18_240px,#4c0915_330px,#3a0813_480px,#1e060d_560px,#2d0c16_600px,#18050b_660px,#1a060c_832px)] text-white [&>*]:shrink-0">
    <svg class="ml-[5px] h-[24px] w-[25px]" viewBox="0 0 25 24"><circle cx="12.500" cy="12" r="11.500" fill="url(#gOrb)" stroke="#8fb4c8" stroke-width=".8"/><path d="M7 7.500q3-1.500 5.300 0L11.500 12Q8.500 10.700 6 12z" fill="#f26a2a"/><path d="M13 7.800q3 1.200 6-.3l-1 4.500q-3 1.300-5.600 0z" fill="#8cc63e"/><path d="M5.800 12.800q3-1.300 5.500 0l-.9 4.400Q8 16 5 17z" fill="#46a6e4"/><path d="M12.300 13q3 1.200 5.600 0l-1 4.300q-3 1.200-5.500 0z" fill="#fccb2e"/></svg>
    <svg class="ml-[18px] h-[20px] w-[21px]" viewBox="0 0 21 20"><path d="M2 12l8 7 9-6v-3l-9 4z" fill="#e8e2c4" stroke="#536a24" stroke-width=".8"/><path d="M1 5l10-4 8 8-9 6z" fill="#6fa044" stroke="#36591c" stroke-width=".8"/><path d="M3 6l8 8" stroke="#b9dc8c"/></svg>
    <svg class="ml-[18px] h-[20px] w-[22px]" viewBox="0 0 22 20"><path d="M1 18V2h7l2 2h10v14z" fill="#f2d98a" stroke="#b99444" stroke-width=".8"/><path d="M2 8h19v10H1z" fill="#fbecb2"/><path d="M4 19v-6q0-2 2-2h10q2 0 2 2v6h-3v-4H7v4z" fill="#a4d4ee" stroke="#5a94bc" stroke-width=".7"/></svg>
    <div class="ml-[10px] flex h-[24px] w-[38px] items-center justify-center rounded-[2px] border border-[#b08890] bg-linear-to-br from-[#a87a84] via-[#73323f] to-[#58212d]"><svg class="h-[18px] w-[18px]" viewBox="0 0 18 18"><rect x="1" y="1" width="16" height="15" rx="1.500" fill="#7eaed4" stroke="#d3e6f4"/><circle cx="9" cy="8.500" r="6" fill="#f07a1c" stroke="#fff" stroke-width=".8"/><path d="M7 5v7l5.500-3.500z" fill="#fff"/></svg></div>
    <div class="ml-[3px] flex h-[24px] w-[37px] items-center justify-center rounded-[2px] border border-[#b08890] bg-linear-to-br from-[#a87a84] via-[#73323f] to-[#58212d]"><svg class="h-[20px] w-[20px]" viewBox="0 0 20 20"><path d="M6 1h10l3 3v15H6z" fill="#f4f8ff" stroke="#7a9bd0"/><path d="M14 6h4M14 9h4M14 12h4M8 16h9" stroke="#6f95d0"/><rect x="1" y="3" width="12" height="12" fill="url(#gBlue)"/><text x="7" y="13" font-size="11" font-weight="bold" fill="#fff" text-anchor="middle" font-family="Liberation Serif">W</text></svg></div>
    <svg class="ml-[11px] h-[22px] w-[22px]" viewBox="0 0 22 22"><path d="M4 2l13-1 4 3-2 15-3 2-13-2-2-3z" fill="#2f62b4" stroke="#143468"/><path d="M7 2h9l-1 7H6z" fill="#e4e8f0"/><circle cx="9" cy="5" r="1.600" fill="#111"/><circle cx="13.500" cy="5" r="1.600" fill="#d33"/><path d="M6 20l1-7 8 1-1 7z" fill="#b9cbe6" stroke="#143468"/><path d="M9 15v4" stroke="#143468" stroke-width="2"/></svg>
    <div class="ml-[10px] flex h-[24px] w-[38px] items-center justify-center rounded-[2px] border border-[#b08890] bg-linear-to-br from-[#a87a84] via-[#73323f] to-[#58212d]"><svg class="h-[21px] w-[21px]" viewBox="0 0 21 21"><path d="M2 2q4-3 8-.5Q16 1 19 7q1 3 0 5 2 5-2 7-3 2-6 0Q3 19 2 12-1 6 2 2z" fill="#17a6e6"/><text x="10.500" y="16" font-size="16" font-weight="bold" fill="#fff" text-anchor="middle" font-family="Lato">S</text></svg></div>
    <svg class="ml-[12px] h-[22px] w-[20px]" viewBox="0 0 20 22"><path d="M1 3q6-4 11 0-1 6-5 9l-5-3z" fill="#6b1e9e"/><text x="6" y="9" font-size="8" font-weight="bold" fill="#fff" text-anchor="middle" font-family="Liberation Serif">Y</text><path d="M17 1v6" stroke="#7a20b0" stroke-width="2"/><circle cx="12" cy="14" r="6.300" fill="#ffd42a" stroke="#a86a08" stroke-width=".7"/><path d="M8 15h8q-1 4.500-4 4.500T8 15z" fill="#b02020" stroke="#6b1010" stroke-width=".5"/><path d="M9.500 11v2M14 11v2" stroke="#222" stroke-width="1.200"/></svg>
    <div class="ml-[11px] flex h-[24px] w-[38px] items-center justify-center rounded-[2px] border border-[#b08890] bg-linear-to-br from-[#a87a84] via-[#73323f] to-[#58212d]"><svg class="h-[20px] w-[20px]" viewBox="0 0 20 20"><circle cx="10" cy="10" r="9.500" fill="#fcd116"/><path d="M10 10L1.800 5.200A9.500 9.500 0 0 1 18.900 7H10z" fill="#e23b2e"/><path d="M10 10L8 19.300A9.500 9.500 0 0 1 1.800 5.200L6 12z" fill="#3aa745"/><circle cx="10" cy="9.500" r="4.300" fill="#fff"/><circle cx="10" cy="9.500" r="3.400" fill="#3b78d8"/></svg></div>
    <div class="ml-[2px] flex h-[24px] w-[38px] items-center justify-center rounded-[2px] border border-[#b08890] bg-linear-to-br from-[#a87a84] via-[#73323f] to-[#58212d]"><svg class="h-[21px] w-[20px]" viewBox="0 0 20 21"><path d="M1 1h17l1 1v18H1z" fill="#1f4fc8" stroke="#0d2c80" stroke-width=".8"/><path d="M6 1h8v6H6z" fill="#d8dce8"/><path d="M11 2h2v4h-2z" fill="#1f4fc8"/><path d="M3 10h14v10H3z" fill="#fff"/><path d="M4 12.500h12M4 15h12M4 17.500h12" stroke="#e03030"/></svg></div>
    <div class="ml-[3px] flex h-[24px] w-[37px] items-center justify-center rounded-[2px] border border-[#9a7880] bg-linear-to-br from-[#8a6a72] via-[#5a2e38] to-[#48202a]"><svg class="h-[20px] w-[20px]"><use href="#eclipse"/></svg></div>
    <div class="ml-[3px] flex h-[24px] w-[37px] items-center justify-center rounded-[2px] border border-[#e0c8ce] bg-linear-to-br from-[#e0ccd1] via-[#b08a94] to-[#9a6f7b]"><svg class="h-[20px] w-[20px]"><use href="#eclipse"/></svg></div>
    <div class="ml-[3px] flex h-[24px] w-[38px] items-center justify-center rounded-[2px] border border-[#9a7880] bg-linear-to-br from-[#8a6a72] via-[#5a2e38] to-[#48202a]"><svg class="h-[21px] w-[22px]" viewBox="0 0 22 21"><path d="M2 9q4-6 12-5 6 1 5 8-2 7-9 8-4 0-3-4-5 0-6-3z" fill="#cfe4f4" stroke="#6a95ba" stroke-width=".8"/><circle cx="6" cy="10" r="1.800" fill="#e04030"/><circle cx="10" cy="7" r="1.800" fill="#f0b020"/><circle cx="15" cy="9" r="1.800" fill="#40a040"/><circle cx="14" cy="14" r="1.800" fill="#3060c8"/><path d="M11 19L19 3" stroke="#c08a4a" stroke-width="1.800"/><path d="M17 5l1-4 3-1-.5 4.500z" fill="#e0b070"/></svg></div>
    <span class="mb-[3px] ml-[160px] w-[12px]">EN</span>
    <svg class="ml-[8px] h-[4px] w-[6px]" viewBox="0 0 6 4"><path d="M0.500 3.500h5L3 .5z" fill="#fff"/></svg>
    <svg class="ml-[9px] h-[11px] w-[10px]" viewBox="0 0 10 11"><path d="M1 0v11" stroke="#fff" stroke-width="1.200"/><path d="M2 1h3l1 1h3v5H6L5 6H2z" fill="#fff"/><circle cx="7" cy="8" r="2.800" fill="#e02a2a"/><path d="M6 7l2 2M8 7L6 9" stroke="#fff" stroke-width=".8"/></svg>
    <svg class="ml-[5px] h-[11px] w-[10px]" viewBox="0 0 10 11"><path d="M1 2h5v8H1zM2.500 0h2v2h-2z" fill="#fff"/><path d="M5 3h4v3q0 2-2 2v3M6 1v2M8.500 1v2" stroke="#fff" stroke-width="1.200" fill="none"/></svg>
    <svg class="ml-[6px] h-[10px] w-[11px]" viewBox="0 0 11 10"><path d="M3 2h7v5H3zM5 9h4M1 0v4h1M0 1h3" fill="none" stroke="#fff" stroke-width="1.200"/></svg>
    <svg class="ml-[5px] h-[9px] w-[10px]" viewBox="0 0 10 9"><path d="M0 3h2l3-3v9L2 6H0z" fill="#fff"/><path d="M6.500 2.500q1.500 2 0 4M8 1q2.500 3.500 0 7" fill="none" stroke="#fff" stroke-width=".8"/></svg>
    <div class="ml-[9px] flex h-[25px] w-[38px] flex-col items-center justify-center gap-[3px] whitespace-nowrap bg-[radial-gradient(ellipse_at_top,#a04a78_0,transparent_55%)] tracking-[-0.300px]"><span>2:52 PM</span><span>3/23/2010</span></div>
    <div class="ml-[4px] h-[25px] w-[8px] border border-[#6a4a54] bg-linear-to-b from-[#6b4a55] to-[#1c0a10]"></div>
  </footer>

  <!-- Context menu -->
  <div class="absolute left-[41px] top-[106px] h-[364px] w-[273px] border border-[#979797] bg-[#f0f0f0] p-[1px] text-[9.800px] tracking-[-0.310px] shadow-[1px_1px_1px_#777]">
    <div class="relative flex flex-col before:absolute before:inset-y-0 before:left-[18px] before:border-l before:border-[#e0e0e0] *:relative *:flex *:items-center *:whitespace-nowrap [&>div]:h-[14.330px] [&>div]:pl-[21px] [&>div]:pt-px [&>div>svg]:absolute [&>hr]:my-[2px] [&>hr]:ml-[19px] [&>hr]:h-[1px] [&>hr]:border-[#d8d8d8]">
      <div class="rounded-[2px] bg-linear-to-b from-[#f0f4fa] to-[#e2ebf6] outline outline-[#aecff7]">New<svg class="right-[7px] h-[5px] w-[3px]" viewBox="0 0 3 5"><path d="M0 0v5l3-2.500z"/></svg></div>
      <div>Go Into</div>
      <div>Open in New Window</div>
      <hr>
      <div><svg class="left-[3px] h-[11px] w-[11px]"><use href="#copy"/></svg>Copy</div>
      <div class="text-[#838383]"><svg class="left-[3px] h-[11px] w-[11px]"><use href="#paste"/></svg>Paste</div>
      <div><svg class="left-[3px] h-[9px] w-[10px]"><use href="#del"/></svg>Delete</div>
      <div>Move...</div>
      <div>Rename...</div>
      <hr>
      <div><svg class="left-[2px] h-[10px] w-[11px]"><use href="#imp"/></svg>Import...</div>
      <div><svg class="left-[2px] h-[10px] w-[11px]"><use href="#exp"/></svg>Export...</div>
      <hr>
      <div><svg class="left-[3px] h-[10px] w-[10px]"><use href="#refresh"/></svg>Refresh</div>
      <div>Close Project</div>
      <div class="text-[#838383]">Close Unrelated Projects</div>
      <hr>
      <div>Validate</div>
      <div>Run As<svg class="right-[7px] h-[5px] w-[3px]" viewBox="0 0 3 5"><path d="M0 0v5l3-2.500z"/></svg></div>
      <div>Debug As<svg class="right-[7px] h-[5px] w-[3px]" viewBox="0 0 3 5"><path d="M0 0v5l3-2.500z"/></svg></div>
      <div>Team<svg class="right-[7px] h-[5px] w-[3px]" viewBox="0 0 3 5"><path d="M0 0v5l3-2.500z"/></svg></div>
      <div>Compare With<svg class="right-[7px] h-[5px] w-[3px]" viewBox="0 0 3 5"><path d="M0 0v5l3-2.500z"/></svg></div>
      <div>Restore from Local History...</div>
      <div>Source<svg class="right-[7px] h-[5px] w-[3px]" viewBox="0 0 3 5"><path d="M0 0v5l3-2.500z"/></svg></div>
      <div>Configure<svg class="right-[7px] h-[5px] w-[3px]" viewBox="0 0 3 5"><path d="M0 0v5l3-2.500z"/></svg></div>
      <hr>
      <div>Properties</div>
      <hr>
      <div class="text-[#838383]"><svg class="left-[4px] h-[8px] w-[10px]"><use href="#rmctx"/></svg>Remove from Context<span class="ml-auto mr-[13px] tracking-[-0.080px]">Ctrl+Alt+Shift+Down</span></div>
    </div>
  </div>

  <!-- New submenu -->
  <div class="absolute left-[309px] top-[106px] h-[163px] w-[140px] border border-[#979797] bg-[#f0f0f0] p-[1px] text-[9.800px] tracking-[-0.310px] shadow-[1px_1px_1px_#777]">
    <div class="relative flex flex-col before:absolute before:inset-y-0 before:left-[19px] before:border-l before:border-[#e0e0e0] *:relative *:flex *:items-center *:whitespace-nowrap [&>div]:h-[14.330px] [&>div]:pl-[22px] [&>div]:pt-px [&>div>svg]:absolute [&>hr]:my-[2px] [&>hr]:ml-[20px] [&>hr]:h-[1px] [&>hr]:border-[#d8d8d8]">
      <div><b class="absolute left-[3px] bg-[#fff7a8] text-[9px] leading-[9px] tracking-[-0.600px]"><span class="text-[#d85a10]">S</span>i*</b>Sistar Project</div>
      <div><svg class="left-[4px] h-[10px] w-[10px]"><use href="#new"/></svg>Project...</div>
      <hr>
      <div><svg class="left-[4px] h-[10px] w-[10px]"><use href="#folderc"/></svg>Folder</div>
      <div><svg class="left-[4px] h-[10px] w-[10px]"><use href="#filen"/></svg>File</div>
      <div class="rounded-[2px] bg-linear-to-b from-[#f0f4fa] to-[#e6eef8] outline outline-[#aecff7]"><svg class="left-[4px] h-[10px] w-[9px]"><use href="#dfile"/></svg>SI* Diagram</div>
      <div><svg class="left-[4px] h-[10px] w-[10px]"><use href="#swirl"/></svg>Goal Scenario</div>
      <div><b class="absolute left-[5px] text-[11px] text-[#4040e0]">P</b>Plan</div>
      <div><b class="absolute left-[2px] flex h-[11px] w-[12px] items-center border border-[#333] bg-white text-[9px] tracking-[-0.500px] text-[#157a15]">P<span class="text-[6px] text-black">tt</span></b>Pattern</div>
      <hr>
      <div><svg class="left-[4px] h-[10px] w-[10px]"><use href="#new"/></svg>Example...</div>
      <hr>
      <div><svg class="left-[4px] h-[10px] w-[10px]"><use href="#new"/></svg>Other...<span class="ml-auto mr-[12px] tracking-[0px]">Ctrl+N</span></div>
    </div>
  </div>
</main>
</body>
</html>
